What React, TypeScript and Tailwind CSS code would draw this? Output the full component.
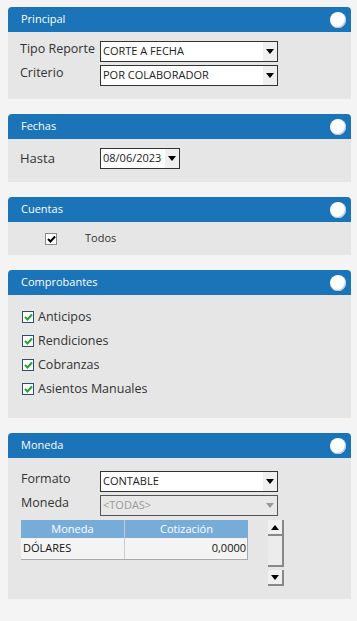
import React from "react"

const font = { fontFamily: '"Open Sans", "Noto Sans", sans-serif' }

function Panel({ title, children, bodyClass }: { title: string; children?: React.ReactNode; bodyClass: string }) {
    return (
        <div className="w-[343px]">
            <div className="flex h-[25px] items-center justify-between rounded-t-[4px] bg-[#1c74b8] pl-[13px] pr-[5px]">
                <span className="text-[11px] text-white">{title}</span>
                <span className="h-4 w-4 rounded-full bg-white shadow-[inset_-1px_-1px_1px_#aac4dc]" />
            </div>
            <div className={"bg-[#e6e6e6] " + bodyClass}>{children}</div>
        </div>
    )
}

function Arrow({ color = "#000" }: { color?: string }) {
    return (
        <svg width="8" height="5" viewBox="0 0 8 5">
            <path d="M0 0 H8 L4 5 Z" fill={color} />
        </svg>
    )
}

function Select({ value, w = "w-[178px]", disabled = false }: { value: string; w?: string; disabled?: boolean }) {
    return (
        <div className={`flex h-[21px] ${w} items-stretch border ${disabled ? "border-[#555] bg-[#e8e8e8]" : "border-[#333] bg-white"}`}>
            <span className={`flex flex-1 items-center pl-[2px] text-[11px] ${disabled ? "text-[#9a9a9a]" : "text-[#222]"}`}>{value}</span>
            <span className={`flex w-[14px] items-center justify-center ${disabled ? "" : "bg-[#efefef]"}`}>
                <Arrow color={disabled ? "#999" : "#000"} />
            </span>
        </div>
    )
}

function GreenCheck({ label }: { label: string }) {
    return (
        <div className="flex h-6 items-center gap-[4px]">
            <span className="flex h-[12px] w-[12px] items-center justify-center border border-[#2f4b6e] bg-white">
                <svg width="9" height="8" viewBox="0 0 9 8">
                    <path d="M1 4 L3.5 6.5 L8 1.5" stroke="#1fa52a" strokeWidth="2" fill="none" />
                </svg>
            </span>
            <span className="text-[12.5px] text-[#333]">{label}</span>
        </div>
    )
}

export default function App() {
    return (
        <div className="flex min-h-[621px] flex-col gap-[15px] bg-[#f4f4f4] px-2 pt-[7px]" style={font}>
            <Panel title="Principal" bodyClass="px-3 pt-[9px] pb-[13px]">
                <div className="flex flex-col gap-[3px]">
                    <div className="flex items-center">
                        <span className="w-[80px] -mt-[4px] text-[12.5px] text-[#333]">Tipo Reporte</span>
                        <Select value="CORTE A FECHA" />
                    </div>
                    <div className="flex items-center">
                        <span className="w-[80px] -mt-[4px] text-[12.5px] text-[#333]">Criterio</span>
                        <Select value="POR COLABORADOR" />
                    </div>
                </div>
            </Panel>

            <Panel title="Fechas" bodyClass="px-3 pt-[9px] pb-[13px]">
                <div className="flex items-center">
                    <span className="w-[80px] text-[13px] text-[#333]">Hasta</span>
                    <Select value="08/06/2023" w="w-[80px]" />
                </div>
            </Panel>

            <Panel title="Cuentas" bodyClass="h-[33px] pl-[37px] flex items-center">
                <span className="flex h-[12px] w-[12px] items-center justify-center border border-[#888] bg-white">
                    <svg width="9" height="8" viewBox="0 0 9 8">
                        <path d="M1 4 L3.5 6.5 L8 1.5" stroke="#000" strokeWidth="2" fill="none" />
                    </svg>
                </span>
                <span className="ml-[28px] text-[11px] text-[#333]">Todos</span>
            </Panel>

            <Panel title="Comprobantes" bodyClass="pl-[14px] pt-[10px] pb-[17px]">
                <GreenCheck label="Anticipos" />
                <GreenCheck label="Rendiciones" />
                <GreenCheck label="Cobranzas" />
                <GreenCheck label="Asientos Manuales" />
            </Panel>

            <Panel title="Moneda" bodyClass="pl-[13px] pt-[13px] pb-[13px]">
                <div className="flex flex-col gap-[3px]">
                    <div className="flex items-center">
                        <span className="w-[79px] -mt-[4px] text-[12.5px] text-[#333]">Formato</span>
                        <Select value="CONTABLE" />
                    </div>
                    <div className="flex items-center">
                        <span className="w-[79px] -mt-[4px] text-[12.5px] text-[#333]">Moneda</span>
                        <Select value="<TODAS>" disabled />
                    </div>
                </div>
                <div className="mt-[4px] flex items-start">
                    <div className="w-[227px]">
                        <div className="grid h-[18px] grid-cols-[104px_123px] bg-[#77acd9] text-[11px] text-white">
                            <span className="flex items-center justify-center border-r border-[#c8c8c8]">Moneda</span>
                            <span className="flex items-center justify-center">Cotización</span>
                        </div>
                        <div className="grid h-[22px] grid-cols-[104px_123px] border-b border-r border-[#aaa] bg-[#f4f4f4] text-[11px] text-[#111]">
                            <span className="flex items-center border-r border-[#ccc] pl-[2px]">DÓLARES</span>
                            <span className="flex items-center justify-end pr-[2px]">0,0000</span>
                        </div>
                    </div>
                    <div className="ml-[20px] flex w-[16px] flex-col">
                        <span className="flex h-[16px] items-center justify-center border-r-2 border-b-2 border-[#888] bg-[#f0f0f0]">
                            <svg width="8" height="5" viewBox="0 0 8 5"><path d="M0 5 H8 L4 0 Z" fill="#000" /></svg>
                        </span>
                        <span className="h-[31px] border-r-2 border-b-2 border-[#888] bg-[#ececec]" />
                        <span className="mt-[3px] flex h-[16px] items-center justify-center border-r-2 border-b-2 border-[#888] bg-[#f0f0f0]">
                            <Arrow />
                        </span>
                    </div>
                </div>
            </Panel>
        </div>
    )
}
